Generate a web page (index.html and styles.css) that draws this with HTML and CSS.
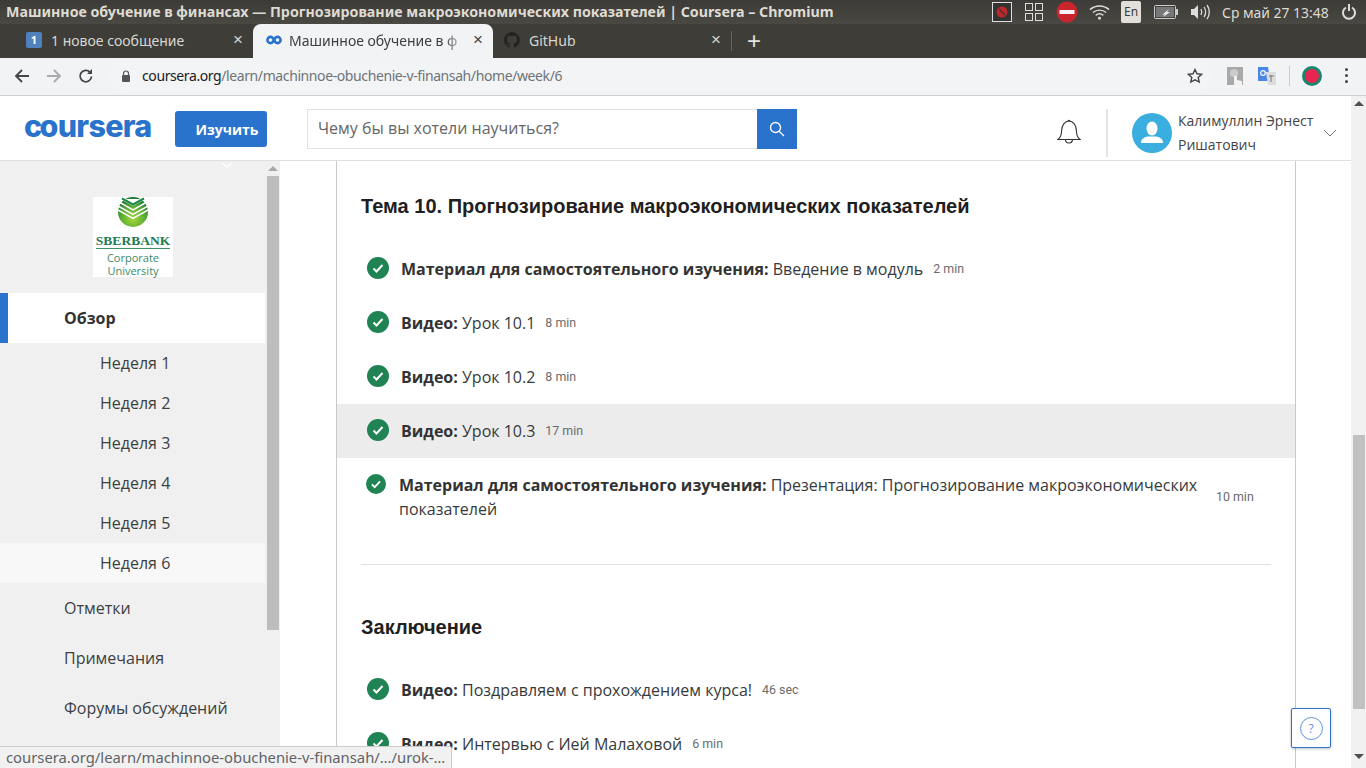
FILE: index.html
```html
<!DOCTYPE html>
<html lang="ru">
<head>
<meta charset="utf-8">
<title>Coursera</title>
<link rel="stylesheet" href="styles.css">
</head>
<body>
<div class="screen">
  <div class="titlebar">
    <div class="wintitle">Машинное обучение в финансах — Прогнозирование макроэкономических показателей | Coursera – Chromium</div>
    <div class="indicators">
      <svg class="ind i-rec" viewBox="0 0 20 20"><rect x="0.5" y="0.5" width="19" height="19" fill="#333" stroke="#ddd"/><circle cx="10" cy="10" r="5.5" fill="#c0272d"/><path d="M7 7l6 6" stroke="#333" stroke-width="1.2"/></svg>
      <svg class="ind i-grid" viewBox="0 0 18 18" fill="none" stroke="#ddd"><rect x="0.5" y="0.5" width="7" height="7"/><rect x="10.5" y="0.5" width="7" height="7"/><rect x="0.5" y="10.5" width="7" height="7"/><rect x="10.5" y="10.5" width="7" height="7"/></svg>
      <svg class="ind i-stop" viewBox="0 0 22 22"><circle cx="11" cy="11" r="10.5" fill="#c8262c"/><rect x="3.5" y="9" width="15" height="4" fill="#f4f4f4"/></svg>
      <svg class="ind i-wifi" viewBox="0 0 22 16" fill="none" stroke="#ddd" stroke-width="1.5"><path d="M1 5.5c6-5 14-5 20 0"/><path d="M4 8.5c4-3.300 10-3.300 14 0"/><path d="M7 11.500c2.500-2 5.500-2 8 0"/><circle cx="11" cy="14.500" r="0.8" fill="#ddd"/></svg>
      <span class="lang">En</span>
      <svg class="ind i-bat" viewBox="0 0 24 14"><rect x="0.5" y="0.5" width="21" height="13" rx="1" fill="none" stroke="#ccc"/><rect x="2" y="2" width="18" height="10" fill="#777"/><rect x="22" y="4" width="2" height="6" fill="#ccc"/><path d="M8 10l7-6-2 3 3 0-7 5 2-3z" fill="#eee"/></svg>
      <svg class="ind i-vol" viewBox="0 0 20 18" fill="none" stroke="#ddd" stroke-width="1.300"><path d="M1 6h3l4-4v14l-4-4H1z" fill="#ddd" stroke="none"/><path d="M11 6c1 2 1 4 0 6"/><path d="M14 4c2 3 2 7 0 10"/><path d="M17 2c3 4 3 10 0 14"/></svg>
      <span class="clock">Ср май 27 13:48</span>
      <svg class="ind i-power" viewBox="0 0 14 18" fill="none" stroke="#ddd" stroke-width="2"><path d="M4 4.500a6 6 0 1 0 6 0"/><path d="M7 1v7"/></svg>
    </div>
  </div>

  <div class="tabbar">
    <div class="tab">
      <span class="fav-badge">1</span>
      <span class="tab-label">1 новое сообщение</span>
      <span class="tab-close">×</span>
    </div>
    <div class="tab tab-active">
      <svg class="fav" viewBox="0 0 16 10" fill="none" stroke="#2a73cc" stroke-width="2.600"><circle cx="4.500" cy="5" r="3.100"/><circle cx="11.500" cy="5" r="3.100"/></svg>
      <span class="tab-label tab-fade">Машинное обучение в ф</span>
      <span class="tab-close tab-close-active">×</span>
    </div>
    <div class="tab tab-gh">
      <svg class="fav" viewBox="0 0 16 16"><path fill="#222" d="M8 0a8 8 0 0 0-2.500 15.600c.4.100.5-.2.500-.4v-1.400c-2.200.5-2.700-1-2.700-1-.4-.9-.9-1.200-.9-1.200-.7-.5.100-.5.100-.5.800.100 1.200.8 1.200.8.700 1.200 1.900.9 2.300.7.100-.5.300-.9.500-1.100-1.800-.2-3.600-.9-3.600-4 0-.9.300-1.600.8-2.100-.1-.2-.4-1 .1-2.100 0 0 .7-.2 2.200.8a7.500 7.500 0 0 1 4 0c1.500-1 2.200-.8 2.200-.8.400 1.100.2 1.900.1 2.100.5.600.8 1.300.8 2.100 0 3.100-1.900 3.700-3.700 3.900.3.300.6.800.6 1.500v2.200c0 .2.100.5.600.4A8 8 0 0 0 8 0z"/></svg>
      <span class="tab-label">GitHub</span>
      <span class="tab-close">×</span>
    </div>
    <span class="tab-sep"></span>
    <span class="tab-new">+</span>
  </div>

  <div class="toolbar">
    <svg class="nav" viewBox="0 0 16 16" fill="none" stroke="#444" stroke-width="1.800"><path d="M15 8H2M8 2L2 8l6 6"/></svg>
    <svg class="nav nav-off" viewBox="0 0 16 16" fill="none" stroke="#aaa" stroke-width="1.800"><path d="M1 8h13M8 2l6 6-6 6"/></svg>
    <svg class="nav" viewBox="0 0 16 16" fill="none" stroke="#444" stroke-width="1.800"><path d="M13.500 8.500a5.700 5.700 0 1 1-1.600-4.400"/><path d="M14 1v5H9" fill="#444" stroke="none"/></svg>
    <div class="omnibox">
      <svg class="lock" viewBox="0 0 10 12"><path d="M2.500 5V3.500a2.500 2.500 0 0 1 5 0V5" fill="none" stroke="#555" stroke-width="1.200"/><rect x="1" y="5" width="8" height="7" rx="1" fill="#555"/></svg>
      <span class="url"><span class="url-host">coursera.org</span>/learn/machinnoe-obuchenie-v-finansah/home/week/6</span>
      <svg class="star" viewBox="0 0 16 16" fill="none" stroke="#444" stroke-width="1.400"><path d="M8 1.500l2 4.300 4.600.5-3.400 3.100 1 4.600L8 11.800l-4.200 2.200 1-4.600L1.400 6.300 6 5.800z"/></svg>
    </div>
    <svg class="ext ext-a" viewBox="0 0 16 18"><rect width="16" height="18" fill="#a9a9a9"/><circle cx="7" cy="6" r="4" fill="#ccc"/><path d="M7 18V9h3v4l5 1v4z" fill="#f2f2f2"/></svg>
    <svg class="ext ext-b" viewBox="0 0 18 18"><path d="M0 0h10l2 14H0z" fill="#4a86e8"/><path d="M8 5h10v13H10z" fill="#ddd"/><circle cx="5" cy="6" r="2.300" fill="none" stroke="#fff" stroke-width="1.200"/><path d="M11 9h5M13 8v7" stroke="#777"/></svg>
    <span class="ext-sep"></span>
    <svg class="ext ext-c" viewBox="0 0 20 20"><circle cx="10" cy="10" r="8.500" fill="#e8264f" stroke="#16866f" stroke-width="3"/></svg>
    <span class="menu-dots"><i></i><i></i><i></i></span>
  </div>

  <div class="viewport">
    <div class="page">
      <header class="header">
        <div class="logo"><span class="logo-c">c</span>oursera</div>
        <button class="explore">Изучить</button>
        <div class="search">
          <span class="search-input">Чему бы вы хотели научиться?</span>
          <span class="search-btn"><svg class="search-icon" viewBox="0 0 16 16" fill="none" stroke="#fff" stroke-width="1.300"><circle cx="6.500" cy="6.500" r="5"/><path d="M10.200 10.200L15 15"/></svg></span>
        </div>
        <svg class="bell" viewBox="0 0 24 26" fill="none" stroke="#333" stroke-width="1.100"><path d="M1 20.500c2.500-2 3.500-4 3.500-8C4.500 6 8 2 12 2s7.500 4 7.500 10.500c0 4 1 6 3.500 8z"/><path d="M8.500 20.500a3.500 3.500 0 0 0 7 0"/><path d="M11 2.200a1 1 0 0 1 2 0"/></svg>
        <span class="head-sep"></span>
        <div class="avatar"><svg class="avatar-svg" viewBox="0 0 40 40"><circle cx="20" cy="20" r="20" fill="#3aaede"/><ellipse cx="20" cy="15.500" rx="5.500" ry="7" fill="#fff"/><path d="M9 30c0-4 3-6 7-6.500h8c4 .5 7 2.500 7 6.500z" fill="#fff"/></svg></div>
        <div class="username">Калимуллин Эрнест Ришатович</div>
        <svg class="chev" viewBox="0 0 14 8" fill="none" stroke="#777"><path d="M1 1l6 6 6-6"/></svg>
      </header>

      <div class="body">
        <aside class="sidebar">
          <div class="side-inner">
            <svg class="side-chev" viewBox="0 0 12 6" fill="none" stroke="#fff" stroke-width="1.500"><path d="M1 1l5 4 5-4"/></svg>
            <div class="sber">
              <svg class="sber-mark" viewBox="0 0 32 30">
                <defs><radialGradient id="sg" cx="0.5" cy="0.72" r="0.65"><stop offset="0" stop-color="#a8d63c"/><stop offset="0.6" stop-color="#5cae32"/><stop offset="1" stop-color="#1d7a34"/></radialGradient></defs>
                <circle cx="16" cy="15" r="15" fill="url(#sg)"/>
                <path d="M3 2l13 7 13-7z" fill="#fff"/>
                <path d="M2 5l14 8 14-8M1 9l15 8.500 15-8.500M1 13l15 8.500 15-8.500" fill="none" stroke="#fff" stroke-width="1.500"/>
                <path d="M5 1.500l11 6 11-6" fill="none" stroke="#1e8a48" stroke-width="2"/>
              </svg>
              <div class="sber-name">SBERBANK</div>
              <div class="sber-sub">Corporate<br>University</div>
            </div>
            <nav class="sidenav">
              <a class="nav-main nav-current">Обзор</a>
              <a class="nav-week">Неделя 1</a>
              <a class="nav-week">Неделя 2</a>
              <a class="nav-week">Неделя 3</a>
              <a class="nav-week">Неделя 4</a>
              <a class="nav-week">Неделя 5</a>
              <a class="nav-week nav-week-on">Неделя 6</a>
              <a class="nav-main">Отметки</a>
              <a class="nav-main">Примечания</a>
              <a class="nav-main">Форумы обсуждений</a>
            </nav>
          </div>
          <div class="side-scroll"><span class="side-up"></span><span class="side-thumb"></span></div>
        </aside>

        <main class="main">
          <section class="card">
            <h2 class="lesson-title">Тема 10. Прогнозирование макроэкономических показателей</h2>
            <ul class="items">
              <li class="item"><svg class="check" viewBox="0 0 22 22"><circle cx="11" cy="11" r="11" fill="#1f8354"/><path d="M6.500 11.500l3 3 6-6.500" fill="none" stroke="#fff" stroke-width="2"/></svg><span class="item-text"><b>Материал для самостоятельного изучения:</b> Введение в модуль</span><span class="time">2 min</span></li>
              <li class="item"><svg class="check" viewBox="0 0 22 22"><circle cx="11" cy="11" r="11" fill="#1f8354"/><path d="M6.500 11.500l3 3 6-6.500" fill="none" stroke="#fff" stroke-width="2"/></svg><span class="item-text"><b>Видео:</b> Урок 10.1</span><span class="time">8 min</span></li>
              <li class="item"><svg class="check" viewBox="0 0 22 22"><circle cx="11" cy="11" r="11" fill="#1f8354"/><path d="M6.500 11.500l3 3 6-6.500" fill="none" stroke="#fff" stroke-width="2"/></svg><span class="item-text"><b>Видео:</b> Урок 10.2</span><span class="time">8 min</span></li>
              <li class="item item-hover"><svg class="check" viewBox="0 0 22 22"><circle cx="11" cy="11" r="11" fill="#1f8354"/><path d="M6.500 11.500l3 3 6-6.500" fill="none" stroke="#fff" stroke-width="2"/></svg><span class="item-text"><b>Видео:</b> Урок 10.3</span><span class="time">17 min</span></li>
              <li class="item item-long"><svg class="check check-sm" viewBox="0 0 22 22"><circle cx="11" cy="11" r="11" fill="#1f8354"/><path d="M6.500 11.500l3 3 6-6.500" fill="none" stroke="#fff" stroke-width="2"/></svg><span class="item-text item-text-long"><b>Материал для самостоятельного изучения:</b> Презентация: Прогнозирование макроэкономических показателей</span><span class="time time-long">10 min</span></li>
            </ul>
            <hr class="divider">
            <h2 class="lesson-title lesson-title-2">Заключение</h2>
            <ul class="items">
              <li class="item"><svg class="check" viewBox="0 0 22 22"><circle cx="11" cy="11" r="11" fill="#1f8354"/><path d="M6.500 11.500l3 3 6-6.500" fill="none" stroke="#fff" stroke-width="2"/></svg><span class="item-text"><b>Видео:</b> Поздравляем с прохождением курса!</span><span class="time">46 sec</span></li>
              <li class="item"><svg class="check" viewBox="0 0 22 22"><circle cx="11" cy="11" r="11" fill="#1f8354"/><path d="M6.500 11.500l3 3 6-6.500" fill="none" stroke="#fff" stroke-width="2"/></svg><span class="item-text"><b>Видео:</b> Интервью с Ией Малаховой</span><span class="time">6 min</span></li>
            </ul>
          </section>
        </main>
      </div>
    </div>
    <div class="page-scroll"><span class="up"></span><span class="thumb"></span><span class="down"></span></div>
    <div class="help"><span class="help-ring">?</span></div>
    <div class="status">coursera.org/learn/machinnoe-obuchenie-v-finansah/…/urok-…</div>
  </div>
</div>
</body>
</html>
```

FILE: styles.css
```css
* { box-sizing: border-box; }
html, body { margin: 0; padding: 0; height: 100%; overflow: hidden; }
body { font-family: "Open Sans", "Noto Sans", sans-serif; color: #333; background: #fff; }
.screen { width: 1366px; height: 768px; display: flex; flex-direction: column; overflow: hidden; }

/* window title bar */
.titlebar { height: 24px; flex: none; display: flex; align-items: center; justify-content: space-between; background: linear-gradient(#3c3b37, #4a4842); }
.wintitle { padding: 0 0 2px 6px; font: bold 14.220px "Noto Sans", sans-serif; color: #dfdbd2; white-space: nowrap; }
.indicators { display: flex; align-items: center; }
.ind { display: block; flex: none; }
.i-rec { width: 20px; height: 20px; margin-right: 13px; }
.i-grid { width: 18px; height: 18px; margin-right: 13px; }
.i-stop { width: 22px; height: 22px; margin-right: 11px; }
.i-wifi { width: 21px; height: 16px; margin-right: 11px; }
.lang { width: 20px; height: 22px; margin-right: 13px; background: #e3e0da; color: #3c3b37; border-radius: 2px; font: 12px/22px "Noto Sans", sans-serif; text-align: center; }
.i-bat { width: 24px; height: 14px; margin-right: 12px; }
.i-vol { width: 20px; height: 18px; margin-right: 12px; }
.clock { width: 107px; margin-right: 13px; font: 13.900px "Noto Sans", sans-serif; color: #dfdbd2; white-space: nowrap; }
.i-power { width: 14px; height: 18px; margin-right: 10px; }

/* tabs */
.tabbar { height: 34px; flex: none; display: flex; align-items: stretch; padding-left: 13px; background: #3e3d38; }
.tab { width: 240px; display: flex; align-items: center; padding: 0 7px 2px 13px; color: #d8d6d1; font: 14px "Noto Sans", sans-serif; }
.tab-active { background: #f1f3f4; color: #3c4043; border-radius: 8px 8px 0 0; }
.tab-gh { padding-right: 9px; padding-left: 11px; }
.tab-gh .fav { margin-right: 9px; }
.fav, .fav-badge { flex: none; width: 16px; margin-right: 7px; }
.fav { height: 16px; }
.fav-badge { height: 16px; margin-right: 9px; background: #4f81bd; border-radius: 2px; color: #fff; font: bold 11px/16px "Noto Sans", sans-serif; text-align: center; }
.tab-label { flex: 1; min-width: 0; white-space: nowrap; overflow: hidden; }
.tab-fade { -webkit-mask-image: linear-gradient(to right, #000 88%, transparent); mask-image: linear-gradient(to right, #000 88%, transparent); }
.tab-close { flex: none; width: 16px; margin-left: 4px; font: 17px/16px "Liberation Sans", sans-serif; text-align: center; color: #d8d6d1; }
.tab-close-active { color: #444; }
.tab-sep { width: 1px; height: 20px; margin: 7px 0 0 -2px; background: #66655f; }
.tab-new { margin-left: 15px; font: 24px/34px "Liberation Sans", sans-serif; color: #e3e3e3; }

/* toolbar */
.toolbar { height: 38px; flex: none; display: flex; align-items: center; background: #f1f3f4; border-bottom: 1px solid #d0d0d0; padding: 0 0 2px 14px; }
.nav { width: 16px; height: 16px; margin-right: 16px; flex: none; }
.omnibox { width: 1104px; height: 28px; margin-left: -1px; display: flex; align-items: center; background: #f3f4f6; border-radius: 14px; padding: 0 10px 0 12px; }
.lock { width: 10px; height: 12px; flex: none; }
.url { flex: 1; margin-left: 11px; font: 14px "Noto Sans", sans-serif; letter-spacing: -0.400px; color: #6e7377; white-space: nowrap; }
.url-host { color: #202124; }
.star { width: 16px; height: 16px; flex: none; }
.ext { display: block; flex: none; }
.ext-a { width: 16px; height: 18px; margin-left: 14px; }
.ext-b { width: 18px; height: 18px; margin-left: 15px; }
.ext-sep { width: 1px; height: 20px; margin-left: 13px; background: #ccc; }
.ext-c { width: 20px; height: 20px; margin-left: 12px; }
.menu-dots { display: flex; flex-direction: column; gap: 3px; margin-left: 23px; }
.menu-dots i { display: block; width: 3px; height: 3px; border-radius: 50%; background: #444; }

/* page frame */
.viewport { position: relative; flex: 1; display: flex; min-height: 0; }
.page { flex: 1; min-width: 0; display: flex; flex-direction: column; }
.page-scroll { width: 15px; flex: none; display: flex; flex-direction: column; align-items: center; background: #f1f1f1; }
.up { margin-top: 5px; border: 5px solid transparent; border-top: 0; border-bottom: 5px solid #505050; }
.thumb { width: 12px; height: 274px; margin-top: 329px; background: #c1c1c1; }
.down { margin-top: 45px; border: 5px solid transparent; border-bottom: 0; border-top: 5px solid #505050; }

/* site header */
.header { height: 65px; flex: none; display: flex; align-items: center; background: #fff; border-bottom: 1px solid #e0e0e0; padding: 2px 14px 0 24px; }
.logo { width: 128px; margin-top: -6px; font: 800 30.500px/32px Inter, sans-serif; letter-spacing: -0.700px; color: #2a73cc; white-space: nowrap; }
.logo-c { margin-right: -2px; }
.explore { width: 92px; height: 36px; margin: 0 0 0 23px; padding: 0 0 0 12px; border: 0; border-radius: 3px; background: #2a73cc; color: #fff; font: 700 14px "Open Sans", sans-serif; }
.search { width: 490px; height: 40px; margin-left: 40px; display: flex; border: 1px solid #e1e1e1; }
.search-input { flex: 1; padding-left: 10px; font: 16px/36px "Open Sans", sans-serif; color: #666; }
.search-btn { width: 40px; margin: -1px; display: flex; align-items: center; justify-content: center; background: #2a73cc; }
.search-icon { width: 16px; height: 16px; }
.bell { width: 24px; height: 26px; margin: 6px 0 0 260px; flex: none; }
.head-sep { width: 2px; height: 48px; margin: 8px 0 0 25px; background: #e5e5e5; flex: none; }
.avatar { width: 40px; height: 40px; margin: 8px 0 0 24px; flex: none; }
.avatar-svg { display: block; width: 40px; height: 40px; }
.username { width: 140px; margin: 8px 0 0 6px; font: 14px/24px "Open Sans", sans-serif; color: #444; }
.chev { width: 14px; height: 8px; margin: 8px 0 0 5px; flex: none; }

/* body */
.body { flex: 1; min-height: 0; display: flex; }
.sidebar { width: 280px; flex: none; display: flex; background: #f0f0f0; overflow: hidden; }
.side-inner { width: 265px; flex: none; }
.side-chev { display: block; width: 12px; height: 6px; margin: 1px 0 0 221px; }
.sber { width: 80px; height: 80px; margin: 29px 0 16px 93px; background: #fff; display: flex; flex-direction: column; align-items: center; color: #1f7a50; }
.sber-mark { width: 32px; height: 30px; flex: none; }
.sber-name { margin-top: 6px; font: bold 13.500px/15px "Liberation Serif", serif; border-bottom: 1px solid #3d9068; white-space: nowrap; }
.sber-sub { margin-top: 2px; font: 11px/13px "Open Sans", sans-serif; text-align: center; color: #3d8a68; }
.sidenav { display: flex; flex-direction: column; }
.sidenav a { display: block; color: #3c4043; font-size: 16px; }
.nav-main { height: 50px; padding-left: 64px; line-height: 50px; }
.sidenav .nav-current { background: #fff; font-weight: 700; color: #333; box-shadow: inset 8px 0 0 #2a73cc; }
.nav-week { height: 40px; padding-left: 100px; line-height: 40px; }
.nav-week-on { background: #f8f8f8; }
.side-scroll { width: 15px; flex: none; display: flex; flex-direction: column; align-items: center; }
.side-up { margin-top: 5px; border: 5px solid transparent; border-top: 0; border-bottom: 5px solid #a8a8a8; }
.side-thumb { width: 12px; height: 454px; margin-top: 5px; background: #bdbdbd; }

/* main column */
.main { flex: 1; min-width: 0; overflow: hidden; padding-left: 56px; }
.card { width: 960px; min-height: 100%; border-left: 1px solid #c9c9c9; border-right: 1px solid #c9c9c9; background: #fff; padding-top: 33px; }
.lesson-title { margin: 0 0 24px 24px; font: 700 20px/24px "Liberation Sans", sans-serif; color: #1f1f1f; }
.lesson-title-2 { margin-top: 50px; margin-bottom: 24px; }
.items { list-style: none; margin: 0; padding: 0; }
.item { height: 54px; display: flex; align-items: center; padding-left: 30px; font-size: 16px; color: #373a3c; }
.item-hover { background: #ececec; }
.item-long { height: 76px; align-items: flex-start; padding-top: 15px; padding-left: 29px; }
.check { width: 22px; height: 22px; flex: none; margin: -2px 12px 0 0; }
.check-sm { width: 20px; height: 20px; margin: 1px 13px 0 0; }
.item-text b { font-weight: 700; color: #333; }
.item-text-long { width: 805px; line-height: 24px; }
.time { margin: -2px 0 0 10px; font: 12.400px "Roboto", sans-serif; color: #6b6b6b; }
.time-long { margin: 16px 0 0 12px; }
.divider { margin: 30px 24px 0; border: 0; border-top: 1px solid #e1e1e1; }

/* floating */
.help { position: absolute; left: 1291px; top: 612px; width: 40px; height: 40px; display: flex; align-items: center; justify-content: center; background: #fff; border: 1px solid #2a73cc; border-radius: 2px; box-shadow: 0 1px 3px rgba(0,0,0,.25); }
.help-ring { width: 23px; height: 23px; border: 1px solid #5b94dc; border-radius: 50%; color: #5b94dc; font: 12px/21px "Open Sans", sans-serif; text-align: center; }
.status { position: absolute; left: 0; bottom: 0; height: 22px; padding: 0 6px; background: #f1f1f1; border-top: 1px solid #ccc; border-right: 1px solid #ccc; border-top-right-radius: 3px; font: 14.800px/21px "Noto Sans", sans-serif; color: #5f6368; white-space: nowrap; }
```
